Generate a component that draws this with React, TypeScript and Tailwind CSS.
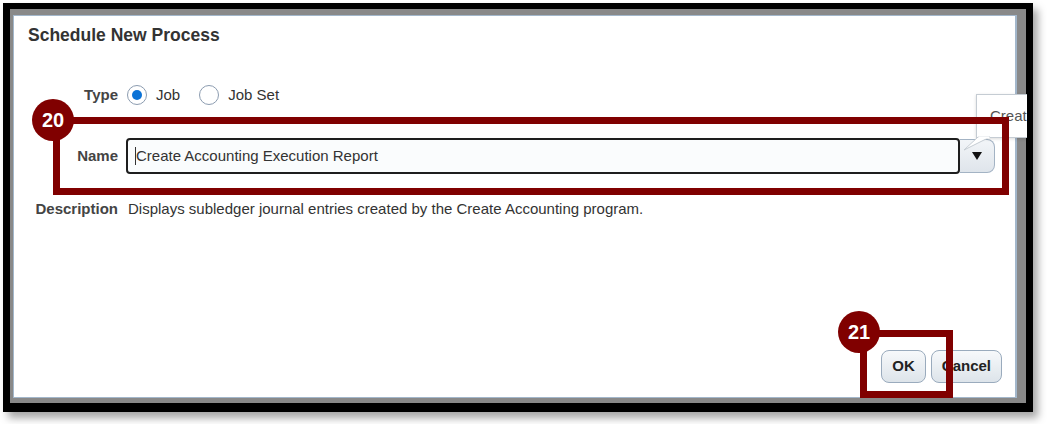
import React from 'react'

const RED = 'border-[#800000]'

const Radio = ({ checked }: { checked?: boolean }) => (
  <span className="flex h-[20px] w-[20px] items-center justify-center rounded-full border border-[#8c9cb0] bg-white">
    {checked && <span className="h-[10px] w-[10px] rounded-full bg-[#0b72d6]" />}
  </span>
)

const Badge = ({ n, className }: { n: string; className: string }) => (
  <div
    className={`absolute flex h-[42px] w-[42px] items-center justify-center rounded-full bg-[#800000] text-[20px] font-bold leading-none text-white ${className}`}
  >
    {n}
  </div>
)

const DialogButton = ({ label }: { label: string }) => (
  <button className="h-[33px] rounded-[8px] border border-[#9aabbd] bg-gradient-to-b from-[#f7f9fb] to-[#dde4ea] px-[10px] text-[15px] font-bold text-[#222]">
    {label}
  </button>
)

export default function App() {
  return (
    <div className="relative h-[424px] w-[1047px] overflow-hidden bg-white font-['Liberation_Sans',Arial,sans-serif]">
      {/* window frame */}
      <div className="ml-[3px] mt-[3px] h-[409px] w-[1030px] border-solid border-black border-l-[7px] border-r-[7px] border-t-[6px] border-b-[9px] shadow-[5px_6px_8px_rgba(0,0,0,0.35)]">
        <div className="h-full border-solid border-[#898989] border-l-[3px] border-t-[6px] border-r-[9px] border-b-[5px]">
          <div className="flex h-full flex-col border-solid border-[#a3b7cb] border-l border-t border-b border-r-2 bg-white text-[15px] text-[#333]">
            <div className="pl-[14px] pt-[9px] text-[17.5px] font-bold leading-[20px] text-[#333]">
              Schedule New Process
            </div>

            {/* Type */}
            <div className="mt-[38px] flex h-[24px] items-center">
              <div className="w-[104px] text-right font-bold text-[#444]">Type</div>
              <span className="ml-[9px]">
                <Radio checked />
              </span>
              <span className="ml-[9px]">Job</span>
              <span className="ml-[19px]">
                <Radio />
              </span>
              <span className="ml-[9px]">Job Set</span>
            </div>

            {/* Name */}
            <div className="mt-[31px] flex h-[36px] items-center">
              <div className="w-[104px] text-right font-bold text-[#444]">Name</div>
              <div className="ml-[8px] flex h-[36px] w-[834px] items-center rounded-[4px] border-2 border-[#1e1e1e] bg-[#fafcfd] pl-[7px]">
                <span className="h-[18px] w-px bg-[#333]" />
                <span>Create Accounting Execution Report</span>
              </div>
              <div className="flex h-[34px] w-[35px] items-center justify-center rounded-r-[8px] border border-l-0 border-[#a3b3c4] bg-gradient-to-b from-[#f2f5f8] to-[#dfe5eb]">
                <svg width="10" height="8" viewBox="0 0 10 8">
                  <polygon points="0,0 10,0 5,8" fill="#111" />
                </svg>
              </div>
            </div>

            {/* Description */}
            <div className="mt-[25px] flex h-[20px] items-center">
              <div className="w-[104px] text-right font-bold text-[#444]">Description</div>
              <span className="ml-[10px]">
                Displays subledger journal entries created by the Create Accounting program.
              </span>
            </div>

            <div className="flex-1" />

            <div className="flex justify-end gap-[5px] pb-[14px] pr-[13px]">
              <DialogButton label="OK" />
              <DialogButton label="Cancel" />
            </div>
          </div>
        </div>
      </div>

      {/* hint popup, partly hidden behind the frame */}
      <div className="absolute left-[976px] top-[94px] h-[44px] w-[51px] overflow-hidden border-l border-t border-b border-[#c5ccd3] bg-white shadow-[0_1px_3px_rgba(0,0,0,0.15)]">
        <div className="whitespace-nowrap pl-[13px] pt-[11px] text-[15px] leading-[20px] text-[#555]">
          Creat
        </div>
      </div>
      <svg className="absolute left-[958px] top-[136px]" width="34" height="16" viewBox="0 0 34 16">
        <polygon points="20,1 6,14 32,1" fill="#fff" stroke="#c5ccd3" strokeWidth="1" />
        <line x1="20.5" y1="1.5" x2="31.5" y2="1.5" stroke="#fff" strokeWidth="2" />
      </svg>

      {/* callouts */}
      <div className={`absolute left-[53px] top-[117px] h-[78px] w-[956px] border-[7px] ${RED}`} />
      <Badge n="20" className="left-[32px] top-[99px]" />
      <div className={`absolute left-[860px] top-[330px] h-[68px] w-[93px] border-[7px] ${RED}`} />
      <Badge n="21" className="left-[838px] top-[311px]" />
    </div>
  )
}
